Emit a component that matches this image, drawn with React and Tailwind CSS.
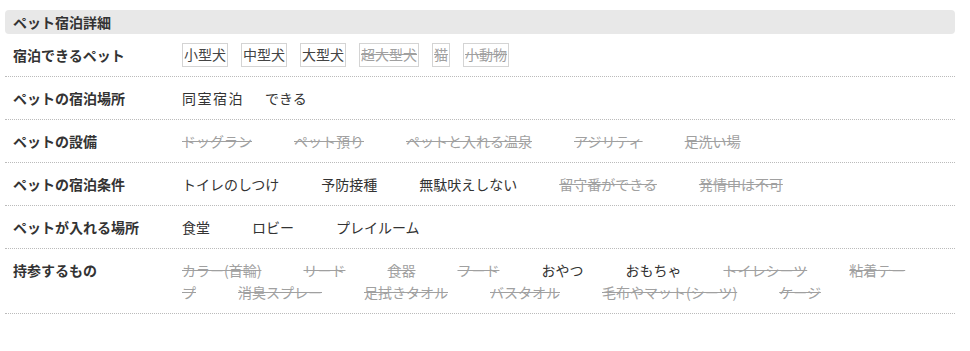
const rows = [
  {
    label: 'ペットの設備',
    items: [
      { t: 'ドッグラン', off: true },
      { t: 'ペット預り', off: true },
      { t: 'ペットと入れる温泉', off: true },
      { t: 'アジリティ', off: true },
      { t: '足洗い場', off: true },
    ],
  },
  {
    label: 'ペットの宿泊条件',
    items: [
      { t: 'トイレのしつけ' },
      { t: '予防接種' },
      { t: '無駄吠えしない' },
      { t: '留守番ができる', off: true },
      { t: '発情中は不可', off: true },
    ],
  },
  {
    label: 'ペットが入れる場所',
    items: [{ t: '食堂' }, { t: 'ロビー' }, { t: 'プレイルーム' }],
  },
  {
    label: '持参するもの',
    items: [
      { t: 'カラー(首輪)', off: true },
      { t: 'リード', off: true },
      { t: '食器', off: true },
      { t: 'フード', off: true },
      { t: 'おやつ' },
      { t: 'おもちゃ' },
      { t: 'トイレシーツ', off: true },
      { t: '粘着テープ', off: true },
      { t: '消臭スプレー', off: true },
      { t: '足拭きタオル', off: true },
      { t: 'バスタオル', off: true },
      { t: '毛布やマット(シーツ)', off: true },
      { t: 'ケージ', off: true },
    ],
  },
]

const pets = [
  { t: '小型犬' },
  { t: '中型犬' },
  { t: '大型犬' },
  { t: '超大型犬', off: true },
  { t: '猫', off: true },
  { t: '小動物', off: true },
]

function Label({ children }) {
  return (
    <div className="w-[177px] shrink-0 pl-2 py-[10px] font-bold leading-[22px] text-[#333]">
      {children}
    </div>
  )
}

export default function App() {
  return (
    <div
      className="min-h-screen bg-white pt-[10px] text-[14px]"
      style={{ fontFamily: '"Noto Sans CJK JP", "Noto Sans", sans-serif' }}
    >
      <div className="ml-[5px] w-[950px]">
        <div className="h-[24px] rounded-[4px] bg-[#e8e8e8] pl-2 font-bold leading-[24px] text-[#333]">
          ペット宿泊詳細
        </div>

        <div className="flex border-b border-dotted border-[#bbb]">
          <Label>宿泊できるペット</Label>
          <div className="flex flex-wrap gap-[13px] py-[9px]">
            {pets.map((p) => (
              <span
                key={p.t}
                className={
                  'border border-[#d4d4d4] px-[1px] leading-[21px] ' +
                  (p.off ? 'text-[#a0a0a0] line-through' : 'text-[#444]')
                }
              >
                {p.t}
              </span>
            ))}
          </div>
        </div>

        <div className="flex border-b border-dotted border-[#bbb]">
          <Label>ペットの宿泊場所</Label>
          <div className="py-[10px] leading-[22px] text-[#333]">
            <span className="tracking-[1.5px]">同室宿泊</span>
            <span className="ml-[21px]">できる</span>
          </div>
        </div>

        {rows.map((r) => (
          <div key={r.label} className="flex border-b border-dotted border-[#bbb]">
            <Label>{r.label}</Label>
            <div className="flex-1 py-[10px] pr-[43px] leading-[22px]">
              {r.items.map((it) => (
                <span
                  key={it.t}
                  className={
                    'mr-[42px] ' + (it.off ? 'text-[#a0a0a0] line-through' : 'text-[#333]')
                  }
                >
                  {it.t}
                </span>
              ))}
            </div>
          </div>
        ))}
      </div>
    </div>
  )
}
